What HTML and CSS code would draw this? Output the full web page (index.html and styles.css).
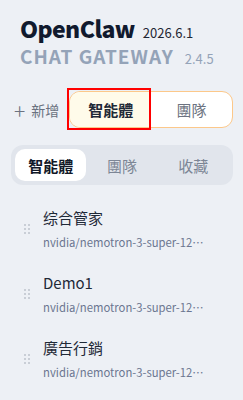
FILE: index.html
```html
<!DOCTYPE html>
<html lang="zh-Hant">
<head>
<meta charset="utf-8">
<link rel="stylesheet" href="styles.css">
</head>
<body>
<aside class="sidebar">
  <header class="brand">
    <div class="brand-line">
      <span class="brand-name">OpenClaw</span>
      <span class="brand-ver">2026.6.1</span>
    </div>
    <div class="brand-line sub">
      <span class="brand-sub">CHAT GATEWAY</span>
      <span class="brand-subver">2.4.5</span>
    </div>
  </header>

  <div class="actions">
    <button class="add-btn"><span class="plus">+</span>新增</button>
    <div class="seg">
      <button class="seg-item active">智能體</button>
      <button class="seg-item">團隊</button>
    </div>
  </div>

  <nav class="tabs">
    <button class="tab active">智能體</button>
    <button class="tab">團隊</button>
    <button class="tab">收藏</button>
  </nav>

  <ul class="list">
    <li class="item">
      <span class="handle"><i></i><i></i><i></i><i></i><i></i><i></i></span>
      <div class="item-text">
        <div class="item-title">综合管家</div>
        <div class="item-sub">nvidia/nemotron-3-super-12…</div>
      </div>
    </li>
    <li class="item">
      <span class="handle"><i></i><i></i><i></i><i></i><i></i><i></i></span>
      <div class="item-text">
        <div class="item-title">Demo1</div>
        <div class="item-sub">nvidia/nemotron-3-super-12…</div>
      </div>
    </li>
    <li class="item">
      <span class="handle"><i></i><i></i><i></i><i></i><i></i><i></i></span>
      <div class="item-text">
        <div class="item-title">廣告行銷</div>
        <div class="item-sub">nvidia/nemotron-3-super-12…</div>
      </div>
    </li>
  </ul>
</aside>
</body>
</html>
```

FILE: styles.css
```css
* { box-sizing: border-box; }
html, body {
  margin: 0;
  padding: 0;
  background: #edf0f5;
  font-family: "Noto Sans CJK TC", "Noto Sans", sans-serif;
}
.sidebar {
  width: 243px;
  height: 400px;
  overflow: hidden;
}
.brand {
  padding: 12px 0 0 20px;
}
.brand-line {
  display: flex;
  align-items: baseline;
  gap: 8px;
  height: 32px;
}
.brand-line.sub {
  height: 26px;
  gap: 11px;
  margin-top: -1px;
}
.brand-name {
  font-size: 23px;
  font-weight: 900;
  color: #111a2e;
  line-height: 32px;
  letter-spacing: -0.6px;
}
.brand-ver {
  font-size: 13px;
  font-weight: 400;
  color: #1f2633;
}
.brand-sub {
  font-size: 19px;
  font-weight: 700;
  color: #94a3b8;
  letter-spacing: 1px;
  line-height: 26px;
}
.brand-subver {
  font-size: 13px;
  color: #94a3b8;
}
.actions {
  display: flex;
  align-items: center;
  padding: 0 10px 0 14px;
  margin-top: 22px;
  gap: 10px;
}
.add-btn {
  border: 0;
  background: none;
  padding: 0;
  font: inherit;
  font-size: 14px;
  color: #6b7280;
  display: flex;
  align-items: center;
  gap: 6px;
  line-height: 20px;
}
.plus {
  font-size: 21px;
  font-weight: 300;
  line-height: 20px;
}
.seg {
  flex: 1;
  display: flex;
  height: 37px;
  border: 1px solid #fcc88a;
  border-radius: 11px;
  background: #fff;
}
.seg-item {
  flex: 1;
  border: 0;
  background: none;
  font: inherit;
  font-size: 15px;
  color: #6b7280;
  padding: 0;
}
.seg-item.active {
  position: relative;
  background: #fffbea;
  color: #1f2937;
  font-weight: 700;
  border-radius: 10px 0 0 10px;
}
.seg-item.active::after {
  content: "";
  position: absolute;
  inset: -4px 0 -3px -3px;
  border: 2px solid #ff0000;
  pointer-events: none;
}
.tabs {
  display: flex;
  margin: 17px 10px 0 11px;
  background: #e1e5ec;
  border-radius: 12px;
  padding: 4px;
  height: 40px;
}
.tab {
  flex: 1;
  border: 0;
  background: none;
  font: inherit;
  font-size: 15px;
  color: #7c8595;
  padding: 0;
  border-radius: 10px;
}
.tab.active {
  background: #fff;
  color: #111827;
  font-weight: 700;
}
.list {
  list-style: none;
  margin: 9px 0 0;
  padding: 0;
}
.item {
  display: flex;
  align-items: center;
  padding: 4px 0 0 24px;
  height: 65px;
}
.handle {
  display: grid;
  grid-template-columns: 2px 2px;
  grid-auto-rows: 2px;
  gap: 2px;
  width: 19px;
  flex: none;
}
.handle i {
  display: block;
  width: 2px;
  height: 2px;
  background: #c9ced6;
}
.item-text {
  min-width: 0;
  flex: 1;
}
.item-title {
  font-size: 15px;
  color: #1f2937;
  line-height: 24px;
}
.item-sub {
  font-size: 11.3px;
  color: #6b7690;
  line-height: 18px;
  margin-top: 3px;
  white-space: nowrap;
}
```
